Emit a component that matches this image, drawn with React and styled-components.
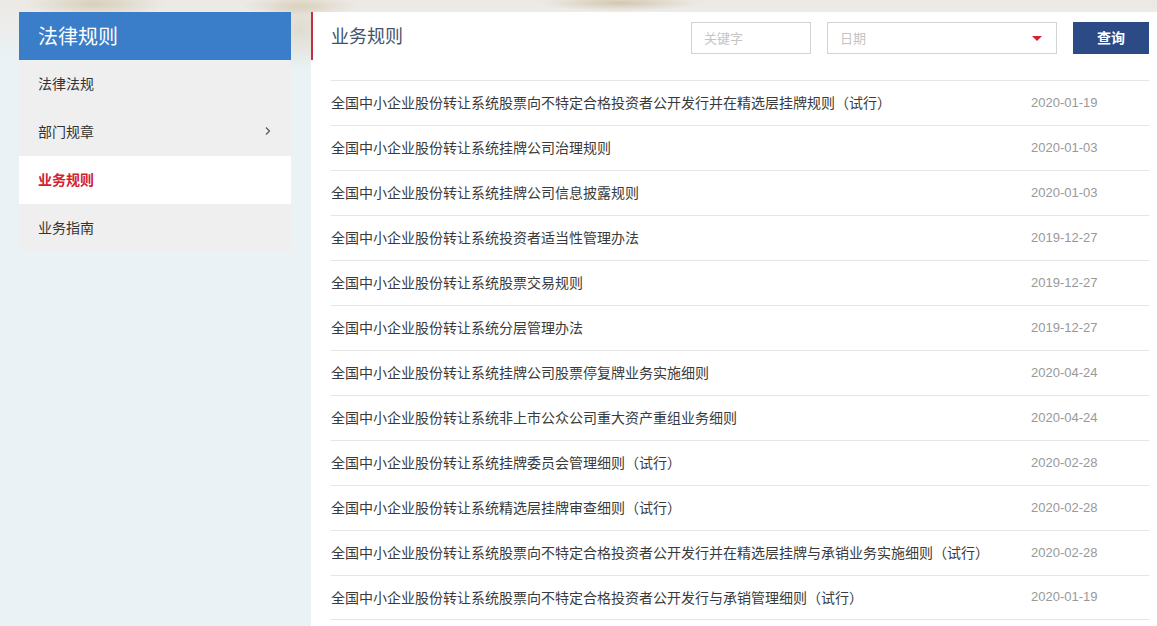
import React from "react";
import styled, { createGlobalStyle } from "styled-components";

const Global = createGlobalStyle`
  html, body { margin: 0; padding: 0; }
  body {
    font-family: "Liberation Sans", "Noto Sans CJK SC", sans-serif;
    background-color: #eaf2f5;
    background-image:
      radial-gradient(ellipse 70px 14px at 95px 4px, rgba(200,185,150,0.55), transparent),
      radial-gradient(ellipse 60px 10px at 300px 6px, rgba(205,190,160,0.5), transparent),
      radial-gradient(ellipse 40px 40px at 300px 30px, rgba(215,205,185,0.55), transparent),
      radial-gradient(ellipse 80px 8px at 620px 3px, rgba(190,170,130,0.55), transparent),
      linear-gradient(#ece9e4 0, #ecebe8 12px, #eaf2f5 60px, #eaf2f5 100%);
    background-repeat: no-repeat;
    min-height: 626px;
    overflow: hidden;
  }
`;

const Page = styled.div`
  display: flex;
  align-items: flex-start;
  gap: 20px;
  padding: 12px 0 0 19px;
  height: 614px;
`;

const Sidebar = styled.nav`
  width: 272px;
  flex-shrink: 0;
  display: flex;
  flex-direction: column;
`;

const SideHeader = styled.div`
  height: 48px;
  box-sizing: border-box;
  padding: 0 0 2px 19px;
  background: #3a7dc9;
  color: #fff;
  font-size: 20px;
  font-family: "Noto Sans CJK SC", sans-serif;
  display: flex;
  align-items: center;
`;

const SideItem = styled.div`
  height: 48px;
  box-sizing: border-box;
  display: flex;
  align-items: center;
  justify-content: space-between;
  padding: 0 19px 2px 19px;
  background: ${p => (p.$active ? "#fff" : "#efefef")};
  color: ${p => (p.$active ? "#d2232f" : "#333")};
  font-weight: ${p => (p.$active ? "bold" : "normal")};
  font-size: 14px;
  font-family: "Noto Sans CJK SC", sans-serif;
`;

const Main = styled.main`
  flex: 1;
  background: #fff;
  height: 100%;
  display: flex;
  flex-direction: column;
  padding: 0 8px 0 0;
`;

const Head = styled.div`
  height: 68px;
  display: flex;
  align-items: flex-start;
`;

const Title = styled.h2`
  margin: 0;
  height: 48px;
  box-sizing: border-box;
  border-left: 2px solid #c0323f;
  padding: 0 0 2px 18px;
  display: flex;
  align-items: center;
  font-size: 18px;
  font-weight: normal;
  color: #45526a;
  font-family: "Noto Sans CJK SC", sans-serif;
  flex: 1;
`;

const Tools = styled.div`
  display: flex;
  gap: 16px;
  margin-top: 10px;
`;

const Input = styled.div`
  width: ${p => p.$w}px;
  height: 32px;
  box-sizing: border-box;
  border: 1px solid #d3d3d3;
  display: flex;
  align-items: center;
  justify-content: space-between;
  padding: 0 12px 2px 12px;
  color: #c4c4c4;
  font-size: 13px;
  font-family: "Noto Sans CJK SC", sans-serif;
`;

const Caret = styled.span`
  width: 0;
  height: 0;
  border-left: 5px solid transparent;
  border-right: 5px solid transparent;
  border-top: 5px solid #d2232f;
  margin: 2px 2px 0 0;
`;

const Button = styled.button`
  width: 76px;
  height: 32px;
  border: 0;
  padding: 0 0 2px;
  background: #2c4b86;
  color: #fff;
  font-weight: bold;
  font-size: 14px;
  font-family: "Noto Sans CJK SC", sans-serif;
  cursor: pointer;
`;

const List = styled.ul`
  list-style: none;
  margin: 0 0 0 20px;
  padding: 0;
`;

const Row = styled.li`
  height: 45px;
  border-top: 1px solid #e6e6e6;
  box-sizing: border-box;
  padding-bottom: 2px;
  display: flex;
  align-items: center;
  justify-content: space-between;
  &:last-child { border-bottom: 1px solid #e6e6e6; }
`;

const RowTitle = styled.a`
  color: #3a3a3a;
  font-size: 14px;
  font-family: "Noto Sans CJK SC", sans-serif;
  text-decoration: none;
`;

const RowDate = styled.span`
  width: 118px;
  color: #999;
  font-size: 13px;
  font-family: "Liberation Sans", sans-serif;
`;

const rows = [
  ["全国中小企业股份转让系统股票向不特定合格投资者公开发行并在精选层挂牌规则（试行）", "2020-01-19"],
  ["全国中小企业股份转让系统挂牌公司治理规则", "2020-01-03"],
  ["全国中小企业股份转让系统挂牌公司信息披露规则", "2020-01-03"],
  ["全国中小企业股份转让系统投资者适当性管理办法", "2019-12-27"],
  ["全国中小企业股份转让系统股票交易规则", "2019-12-27"],
  ["全国中小企业股份转让系统分层管理办法", "2019-12-27"],
  ["全国中小企业股份转让系统挂牌公司股票停复牌业务实施细则", "2020-04-24"],
  ["全国中小企业股份转让系统非上市公众公司重大资产重组业务细则", "2020-04-24"],
  ["全国中小企业股份转让系统挂牌委员会管理细则（试行）", "2020-02-28"],
  ["全国中小企业股份转让系统精选层挂牌审查细则（试行）", "2020-02-28"],
  ["全国中小企业股份转让系统股票向不特定合格投资者公开发行并在精选层挂牌与承销业务实施细则（试行）", "2020-02-28"],
  ["全国中小企业股份转让系统股票向不特定合格投资者公开发行与承销管理细则（试行）", "2020-01-19"],
];

const Chevron = () => (
  <svg width="8" height="10" viewBox="0 0 8 10">
    <path d="M2 1.5 L5.5 5 L2 8.5" fill="none" stroke="#555" strokeWidth="1.2" />
  </svg>
);

export default function App() {
  return (
    <>
      <Global />
      <Page>
        <Sidebar>
          <SideHeader>法律规则</SideHeader>
          <SideItem>法律法规</SideItem>
          <SideItem>部门规章<Chevron /></SideItem>
          <SideItem $active>业务规则</SideItem>
          <SideItem>业务指南</SideItem>
        </Sidebar>
        <Main>
          <Head>
            <Title>业务规则</Title>
            <Tools>
              <Input $w={120}>关键字</Input>
              <Input $w={230}>日期<Caret /></Input>
              <Button>查询</Button>
            </Tools>
          </Head>
          <List>
            {rows.map(([t, d], i) => (
              <Row key={i}>
                <RowTitle href="#">{t}</RowTitle>
                <RowDate>{d}</RowDate>
              </Row>
            ))}
          </List>
        </Main>
      </Page>
    </>
  );
}
